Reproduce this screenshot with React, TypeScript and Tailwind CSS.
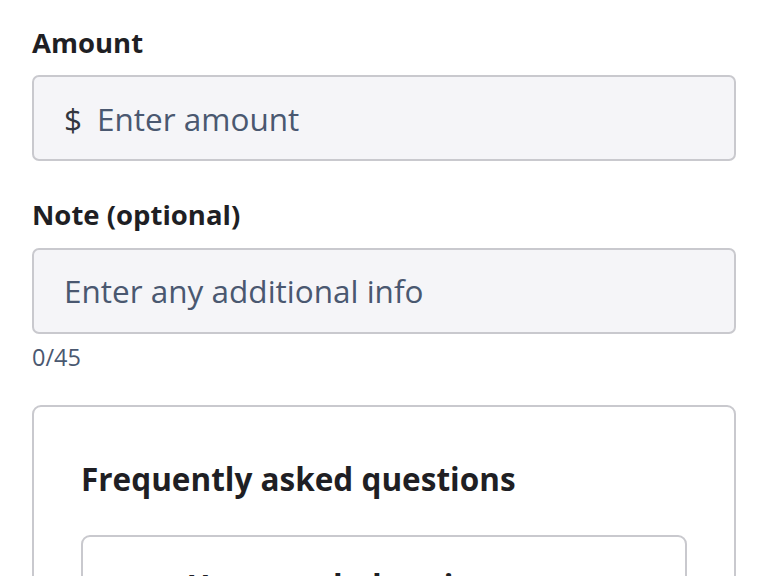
import React from "react";

const sans = { fontFamily: '"Open Sans", "Noto Sans", sans-serif' };

export default function App() {
  return (
    <div className="min-h-[576px] bg-white px-[32px] pt-[22px] text-[#1f1f24]" style={sans}>
      <label className="block text-[27.5px] font-bold leading-normal">Amount</label>
      <div className="mt-[12px] flex h-[86px] items-center rounded-[7px] border-2 border-[#c9c9ce] bg-[#f5f5f8] px-[30px]">
        <span className="text-[31.5px] text-[#33373f]">$</span>
        <span className="ml-[15px] text-[31.5px] text-[#4a5870]">Enter amount</span>
      </div>

      <label className="mt-[33px] block text-[27.5px] font-bold leading-normal">Note (optional)</label>
      <div className="mt-[12px] flex h-[86px] items-center rounded-[7px] border-2 border-[#c9c9ce] bg-[#f5f5f8] px-[30px]">
        <span className="text-[31.5px] text-[#4a5870]">Enter any additional info</span>
      </div>
      <div className="mt-[6px] text-[23.5px] leading-normal text-[#4a5870]">0/45</div>

      <section className="mt-[30px] rounded-[9px] border-2 border-[#c9c9ce] px-[47px] pt-[48px]">
        <h2 className="text-[31.5px] font-bold leading-normal text-[#1f1f24]">Frequently asked questions</h2>
        <div className="mt-[33px] rounded-[9px] border-2 border-[#c9c9ce] px-[80px] pt-[25px] pb-[28px]">
          <p className="text-center text-[31.5px] font-bold leading-normal">How much does it cost to send money abroad?</p>
        </div>
      </section>
    </div>
  );
}
